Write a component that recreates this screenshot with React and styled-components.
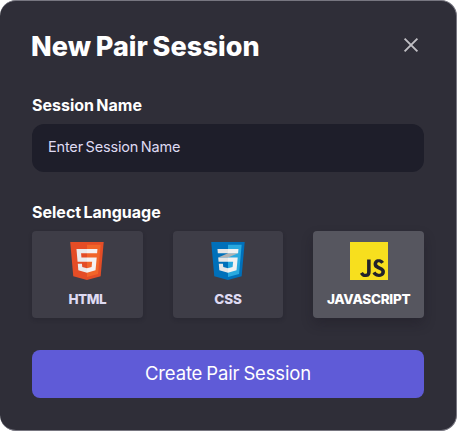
import React, { useState } from "react";
import styled, { createGlobalStyle } from "styled-components";
import { SiJavascript } from "react-icons/si";

const GlobalStyle = createGlobalStyle`
  *, *::before, *::after { box-sizing: border-box; }
  body {
    margin: 0;
    background: #fff;
    font-family: Inter, "Liberation Sans", sans-serif;
  }
  button, input { font: inherit; border: 0; }
`;

const Dialog = styled.form`
  width: 457px;
  height: 431px;
  padding: 31px 32px 32px;
  border: 1px solid #777680;
  border-left: 0;
  border-radius: 16px;
  background: #2f2e38;
  display: flex;
  flex-direction: column;
`;

const Header = styled.header`
  display: flex;
  justify-content: space-between;
  height: 64px;
`;

const Title = styled.h1`
  margin: -1px 0 0 -1px;
  color: #fff;
  font-size: 27px;
  line-height: 32px;
  font-weight: 800;
  letter-spacing: 0.1px;
  word-spacing: -1.5px;
  white-space: nowrap;
`;

const CloseButton = styled.button`
  width: 16px;
  height: 16px;
  margin: 5px 5px 0 0;
  padding: 0;
  background: none;
  color: #c0bfc4;
  svg { display: block; }
`;

const Label = styled.label`
  height: ${(p) => p.$height};
  color: #fff;
  font-size: 16px;
  line-height: 18px;
  font-weight: 650;
  letter-spacing: 0;
  word-spacing: -1.5px;
  white-space: nowrap;
`;

const NameInput = styled.input`
  width: 392px;
  height: 48px;
  margin-bottom: 31px;
  padding: 0 16px 3px;
  border-radius: 12px;
  outline: none;
  background: #1e1e2a;
  color: #dedaf2;
  font-size: 14.5px;
  letter-spacing: -0.17px;
  word-spacing: -1.3px;
  &::placeholder { color: #dedaf2; opacity: 1; }
`;

const LanguageGrid = styled.div`
  display: grid;
  grid-template-columns: repeat(3, 1fr);
  gap: 30px;
  width: 392px;
  height: 87px;
  margin-bottom: 32px;
`;

const LanguageCard = styled.button`
  display: flex;
  flex-direction: column;
  align-items: center;
  gap: 11px;
  padding: 11px 0 0;
  border-radius: 4px;
  background: ${(p) => (p.$selected ? "#56565f" : "#3e3d47")};
  color: ${(p) => (p.$selected ? "#fff" : "#dedaf2")};
  box-shadow: ${(p) =>
    p.$selected ? "0 6px 12px rgba(20, 19, 30, 0.28)" : "0 2px 4px rgba(20, 19, 30, 0.2)"};
  svg { display: block; }
`;

const LanguageName = styled.span`
  font-size: 13.5px;
  line-height: 16px;
  font-weight: 800;
  letter-spacing: ${(p) => p.$tracking};
  white-space: nowrap;
`;

const JsTile = styled.span`
  display: block;
  width: 38px;
  height: 38px;
  background: #22222b;
  color: #f7df1e;
`;

const SubmitButton = styled.button`
  width: 392px;
  height: 48px;
  padding: 0 0 3px;
  border-radius: 8px;
  background: #5f5bd7;
  color: #fff;
  font-size: 18.5px;
  letter-spacing: -0.15px;
  word-spacing: -1px;
`;

const CloseIcon = () => (
  <svg width="16" height="16" viewBox="0 0 16 16" fill="none" stroke="currentColor" strokeWidth="1.9">
    <path d="M1.6 1.6 14.4 14.4M14.4 1.6 1.6 14.4" />
  </svg>
);

const HtmlIcon = () => (
  <svg width="38" height="38" viewBox="0 0 512 512">
    <path fill="#e44d26" d="M71 460 30 0H481L440 460 255 512Z" />
    <path fill="#f16529" d="M256 472 405 431 440 37H256Z" />
    <path
      fill="#ebebeb"
      d="M256 208H181L176 150H256V94H114L129 265H256ZM256 355 192 338 188 293H132L139 382 256 414Z"
    />
    <path
      fill="#f4f1f2"
      d="M255 208V265H325L318 338 255 355V414L371 382 387 208ZM255 94V150H392L397 94Z"
    />
  </svg>
);

const CssIcon = () => (
  <svg width="38" height="38" viewBox="0 0 512 512">
    <path fill="#0070ba" d="M71 460 30 0H481L440 460 255 512Z" />
    <path fill="#29a9df" d="M256 472 405 431 440 37H256Z" />
    <path fill="#b2b2b2" d="M392 150 256 208H124L256 151Z" />
    <path
      fill="#e6e6e6"
      d="M114 94H256V150H119ZM124 208H256V265H129ZM256 355 192 338 188 293H132L139 382 256 414Z"
    />
    <path
      fill="#f1f1f1"
      d="M255 208V265H325L318 338 255 355V414L371 382 387 208ZM255 94V150H392L397 94Z"
    />
  </svg>
);

const JsIcon = () => (
  <JsTile>
    <SiJavascript size={38} />
  </JsTile>
);

const languages = [
  { name: "HTML", Icon: HtmlIcon, tracking: "-0.5px" },
  { name: "CSS", Icon: CssIcon, tracking: "-0.1px" },
  { name: "JAVASCRIPT", Icon: JsIcon, tracking: "-0.25px" },
];

export default function App() {
  const [language, setLanguage] = useState("JAVASCRIPT");
  return (
    <>
      <GlobalStyle />
      <Dialog onSubmit={(e) => e.preventDefault()}>
        <Header>
          <Title>New Pair Session</Title>
          <CloseButton type="button" aria-label="Close">
            <CloseIcon />
          </CloseButton>
        </Header>
        <Label htmlFor="session-name" $height="28px">Session Name</Label>
        <NameInput id="session-name" placeholder="Enter Session Name" />
        <Label as="div" $height="29px">Select Language</Label>
        <LanguageGrid>
          {languages.map(({ name, Icon, tracking }) => (
            <LanguageCard
              key={name}
              type="button"
              $selected={name === language}
              onClick={() => setLanguage(name)}
            >
              <Icon />
              <LanguageName $tracking={tracking}>{name}</LanguageName>
            </LanguageCard>
          ))}
        </LanguageGrid>
        <SubmitButton type="submit">Create Pair Session</SubmitButton>
      </Dialog>
    </>
  );
}
